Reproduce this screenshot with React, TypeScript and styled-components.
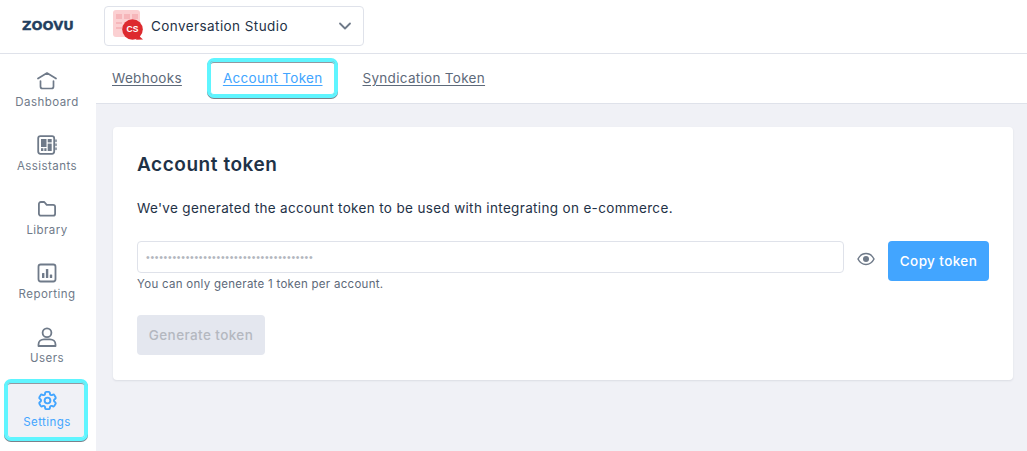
import { createGlobalStyle, styled } from "styled-components";
import { ChevronDown } from "lucide-react";
import { HiOutlineCog6Tooth } from "react-icons/hi2";

const GlobalStyle = createGlobalStyle`
  html, body {
    margin: 0;
    padding: 0;
    background: #f0f1f6;
  }
  * {
    box-sizing: border-box;
  }
`;

const font = `Inter, "Noto Sans", "Liberation Sans", sans-serif`;
const focusRing = "inset 0 0 0 1px #5ff5ff, inset 0 2px 0 #9298a1, 0 0 0 3px #5ff5ff, 0 1px 0 3px #7b818b";

const GearIcon = styled(HiOutlineCog6Tooth)`
  width: 23px;
  height: 23px;
  margin: -2px 0 -1px;
  stroke-width: 2;
`;

const navItems = [
  { label: "Dashboard", icon: <HomeIcon /> },
  { label: "Assistants", icon: <AssistantIcon /> },
  { label: "Library", icon: <FolderIcon /> },
  { label: "Reporting", icon: <ChartIcon /> },
  { label: "Users", icon: <UserIcon /> },
  { label: "Settings", icon: <GearIcon />, active: true },
];

function HomeIcon() {
  return (
    <svg width="20" height="20" viewBox="0 0 20 20" fill="none" stroke="currentColor" strokeWidth="1.7">
      <path d="M1 7.500 10 2l9 5.500" strokeLinecap="round" strokeLinejoin="round" />
      <path d="M3.500 10v5.500a2 2 0 0 0 2 2h9a2 2 0 0 0 2-2V10" strokeLinecap="round" />
    </svg>
  );
}

function AssistantIcon() {
  return (
    <svg width="20" height="20" viewBox="0 0 20 20" fill="none">
      <rect x="1.200" y="1.200" width="16" height="17.600" rx="2.200" stroke="currentColor" strokeWidth="1.800" />
      <rect x="4" y="4" width="5.500" height="8" fill="currentColor" />
      <rect x="10.700" y="4" width="4" height="3.400" fill="currentColor" />
      <rect x="10.700" y="8.600" width="4" height="7.400" fill="currentColor" />
      <rect x="4" y="13.200" width="2.400" height="2.800" fill="currentColor" />
      <rect x="7.300" y="13.200" width="2.200" height="2.800" fill="currentColor" />
      <path d="M19 5v1.500M19 9v1.500M19 13v1.500" stroke="currentColor" strokeWidth="1.400" strokeLinecap="round" />
    </svg>
  );
}

function FolderIcon() {
  return (
    <svg width="20" height="20" viewBox="0 0 20 20" fill="none" stroke="currentColor" strokeWidth="1.800">
      <path
        d="M1.900 5a2 2 0 0 1 2-2h3.400l2.400 2.800h6.400a2 2 0 0 1 2 2v6.900a2 2 0 0 1-2 2H3.900a2 2 0 0 1-2-2z"
        strokeLinejoin="round"
      />
    </svg>
  );
}

function ChartIcon() {
  return (
    <svg width="20" height="20" viewBox="0 0 20 20" fill="none">
      <rect x="1.500" y="1.500" width="17" height="17" rx="2.200" stroke="currentColor" strokeWidth="1.800" />
      <rect x="5" y="10" width="2.400" height="5" rx="0.600" fill="currentColor" />
      <rect x="8.900" y="6" width="2.400" height="9" rx="0.600" fill="currentColor" />
      <rect x="12.800" y="11.500" width="2.400" height="3.500" rx="0.600" fill="currentColor" />
    </svg>
  );
}

function UserIcon() {
  return (
    <svg width="20" height="20" viewBox="0 0 20 20" fill="none" stroke="currentColor" strokeWidth="1.800">
      <circle cx="10" cy="5.800" r="4.400" />
      <path d="M1.500 19v-1.600c0-3 2.500-5 5.500-5h6c3 0 5.500 2 5.500 5V19z" strokeLinejoin="round" />
    </svg>
  );
}

function EyeIcon() {
  return (
    <svg width="18" height="14" viewBox="0 0 18 14" fill="none">
      <path d="M1 7c1.800-3.600 4.600-5.400 8-5.400S15.200 3.400 17 7c-1.800 3.600-4.600 5.400-8 5.400S2.800 10.600 1 7z" stroke="currentColor" strokeWidth="1.500" />
      <circle cx="9" cy="7" r="3" fill="currentColor" />
    </svg>
  );
}

function StudioIcon() {
  return (
    <IconWrap>
      <svg width="32" height="32" viewBox="0 0 32 32">
        <rect x="0" y="0" width="27" height="27" rx="3" fill="#fbd0d2" />
        <rect x="3" y="4" width="6" height="5" fill="#f6b6ba" />
        <rect x="11" y="4" width="6" height="5" fill="#f6b6ba" />
        <rect x="19" y="4" width="6" height="5" fill="#f6b6ba" />
        <rect x="3" y="12" width="6" height="2" fill="#f6b6ba" />
        <rect x="3" y="17" width="6" height="2" fill="#f6b6ba" />
        <circle cx="19.500" cy="19.500" r="10.300" fill="#dd2a2e" />
        <path d="M25 25l5 4.500-7 .2z" fill="#dd2a2e" />
      </svg>
      <IconLetters>CS</IconLetters>
    </IconWrap>
  );
}

export default function App() {
  return (
    <>
      <GlobalStyle />
      <Page>
        <Header>
          <Logo>ZOOVU</Logo>
          <Switcher>
            <StudioIcon />
            <SwitcherLabel>Conversation Studio</SwitcherLabel>
            <ChevronDown size={20} color="#6f7a89" strokeWidth={2.200} />
          </Switcher>
        </Header>
        <Body>
          <Sidebar>
            {navItems.map((item) => (
              <NavItem key={item.label} $active={item.active}>
                {item.icon}
                <NavLabel>{item.label}</NavLabel>
              </NavItem>
            ))}
          </Sidebar>
          <Main>
            <Tabs>
              <Tab>Webhooks</Tab>
              <Tab $active>Account Token</Tab>
              <Tab>Syndication Token</Tab>
            </Tabs>
            <Content>
              <Card>
                <Title>Account token</Title>
                <Description>
                  We've generated the account token to be used with integrating on e-commerce.
                </Description>
                <TokenRow>
                  <TokenField>
                    <TokenInput>
                      <TokenDots>{"•".repeat(38)}</TokenDots>
                    </TokenInput>
                    <Helper>You can only generate 1 token per account.</Helper>
                  </TokenField>
                  <EyeButton>
                    <EyeIcon />
                  </EyeButton>
                  <CopyButton>Copy token</CopyButton>
                </TokenRow>
                <GenerateButton>Generate token</GenerateButton>
              </Card>
            </Content>
          </Main>
        </Body>
      </Page>
    </>
  );
}

const Page = styled.div`
  width: 1027px;
  height: 451px;
  overflow: hidden;
  display: flex;
  flex-direction: column;
  font-family: ${font};
  color: #1f3247;
`;

const Header = styled.header`
  height: 54px;
  flex: none;
  display: flex;
  align-items: center;
  background: #fff;
  border-bottom: 1px solid #dfe2ea;
  padding: 0 0 1px 22px;
`;

const Logo = styled.div`
  width: 82px;
  font-family: "DejaVu Sans", sans-serif;
  font-size: 13px;
  line-height: 12px;
  font-weight: 700;
  -webkit-text-stroke: 0.3px #24405f;
  color: #24405f;
`;

const Switcher = styled.div`
  width: 260px;
  height: 40px;
  display: flex;
  align-items: center;
  padding: 0 8px 0 8px;
  border: 1px solid #dfe2ea;
  border-radius: 4px;
`;

const IconWrap = styled.div`
  position: relative;
  width: 32px;
  height: 32px;
  flex: none;
  svg {
    display: block;
  }
`;

const IconLetters = styled.span`
  position: absolute;
  left: 9px;
  top: 14px;
  width: 21px;
  text-align: center;
  font-family: "Liberation Sans", sans-serif;
  font-size: 8.500px;
  font-weight: 700;
  line-height: 11px;
  color: #fff;
`;

const SwitcherLabel = styled.span`
  flex: 1;
  margin-left: 6px;
  font-size: 13.500px;
  letter-spacing: 0.42px;
  color: #1f3247;
`;

const Body = styled.div`
  flex: 1;
  display: flex;
  min-height: 0;
`;

const Sidebar = styled.nav`
  width: 96px;
  flex: none;
  background: #fff;
  padding: 8px 10px 0 8px;
  display: flex;
  flex-direction: column;
  gap: 8px;
`;

const NavItem = styled.div<{ $active?: boolean }>`
  height: 56px;
  flex: none;
  display: flex;
  flex-direction: column;
  align-items: center;
  justify-content: center;
  gap: 3px;
  padding-top: 1px;
  border-radius: 4px;
  color: ${(p) => (p.$active ? "#42a5ff" : "#6f7a89")};
  background: ${(p) => (p.$active ? "#f0f1f6" : "transparent")};
  box-shadow: ${(p) => (p.$active ? focusRing : "none")};
  margin: ${(p) => (p.$active ? "0 1px 0 -1px" : "0")};
  padding-left: ${(p) => (p.$active ? "2px" : "0")};
`;

const NavLabel = styled.span`
  font-size: 11.500px;
  line-height: 16px;
  letter-spacing: 0.45px;
`;

const Main = styled.main`
  flex: 1;
  min-width: 0;
  display: flex;
  flex-direction: column;
`;

const Tabs = styled.div`
  height: 50px;
  flex: none;
  display: flex;
  align-items: center;
  gap: 28px;
  padding: 0 0 1px 16px;
  background: #fff;
  border-bottom: 1px solid #dfe2ea;
`;

const Tab = styled.span<{ $active?: boolean }>`
  font-size: 13.500px;
  letter-spacing: 0.3px;
  line-height: 34px;
  padding: ${(p) => (p.$active ? "0 12px 0 13px" : "0")};
  text-decoration: underline;
  text-underline-offset: 2px;
  color: ${(p) => (p.$active ? "#42a5ff" : "#5d6979")};
  border-radius: 4px;
  box-shadow: ${(p) => (p.$active ? focusRing : "none")};
`;

const Content = styled.div`
  flex: 1;
  padding: 23px 14px 0 17px;
`;

const Card = styled.section`
  height: 253px;
  padding: 25px 24px 24px;
  background: #fff;
  border-radius: 4px;
  box-shadow: 0 1px 2px rgba(31, 50, 71, 0.1);
`;

const Title = styled.h2`
  margin: 0;
  font-size: 19px;
  line-height: 26px;
  font-weight: 600;
  letter-spacing: 0.55px;
  color: #1f3247;
`;

const Description = styled.p`
  margin: 20px 0 0;
  font-size: 13.500px;
  line-height: 20px;
  letter-spacing: 0.34px;
  color: #1f3247;
`;

const TokenRow = styled.div`
  display: flex;
  align-items: flex-start;
  margin-top: 23px;
`;

const TokenField = styled.div`
  width: 707px;
`;

const TokenInput = styled.div`
  height: 32px;
  display: flex;
  align-items: center;
  padding: 0 8px;
  border: 1px solid #dfe2ea;
  border-radius: 4px;
`;

const TokenDots = styled.span`
  font-family: "Liberation Sans", sans-serif;
  font-size: 10.500px;
  letter-spacing: 0.730px;
  color: #b3b7be;
`;

const Helper = styled.div`
  margin-top: 3px;
  font-size: 11.500px;
  line-height: 16px;
  letter-spacing: 0.28px;
  color: #5d6979;
`;

const EyeButton = styled.div`
  width: 44px;
  height: 36px;
  display: flex;
  align-items: center;
  justify-content: center;
  color: #6f7a89;
`;

const CopyButton = styled.button`
  width: 101px;
  height: 40px;
  padding: 0;
  border: 0;
  border-radius: 4px;
  background: #42a5ff;
  color: #fff;
  font-family: ${font};
  font-size: 13.500px;
  font-weight: 500;
  letter-spacing: 0.4px;
`;

const GenerateButton = styled.button`
  display: block;
  width: 128px;
  height: 40px;
  margin-top: 23px;
  padding: 0;
  border: 0;
  border-radius: 4px;
  background: #e4e7ef;
  color: #b4b8c0;
  font-family: ${font};
  font-size: 13.500px;
  font-weight: 500;
  letter-spacing: 0.4px;
`;
